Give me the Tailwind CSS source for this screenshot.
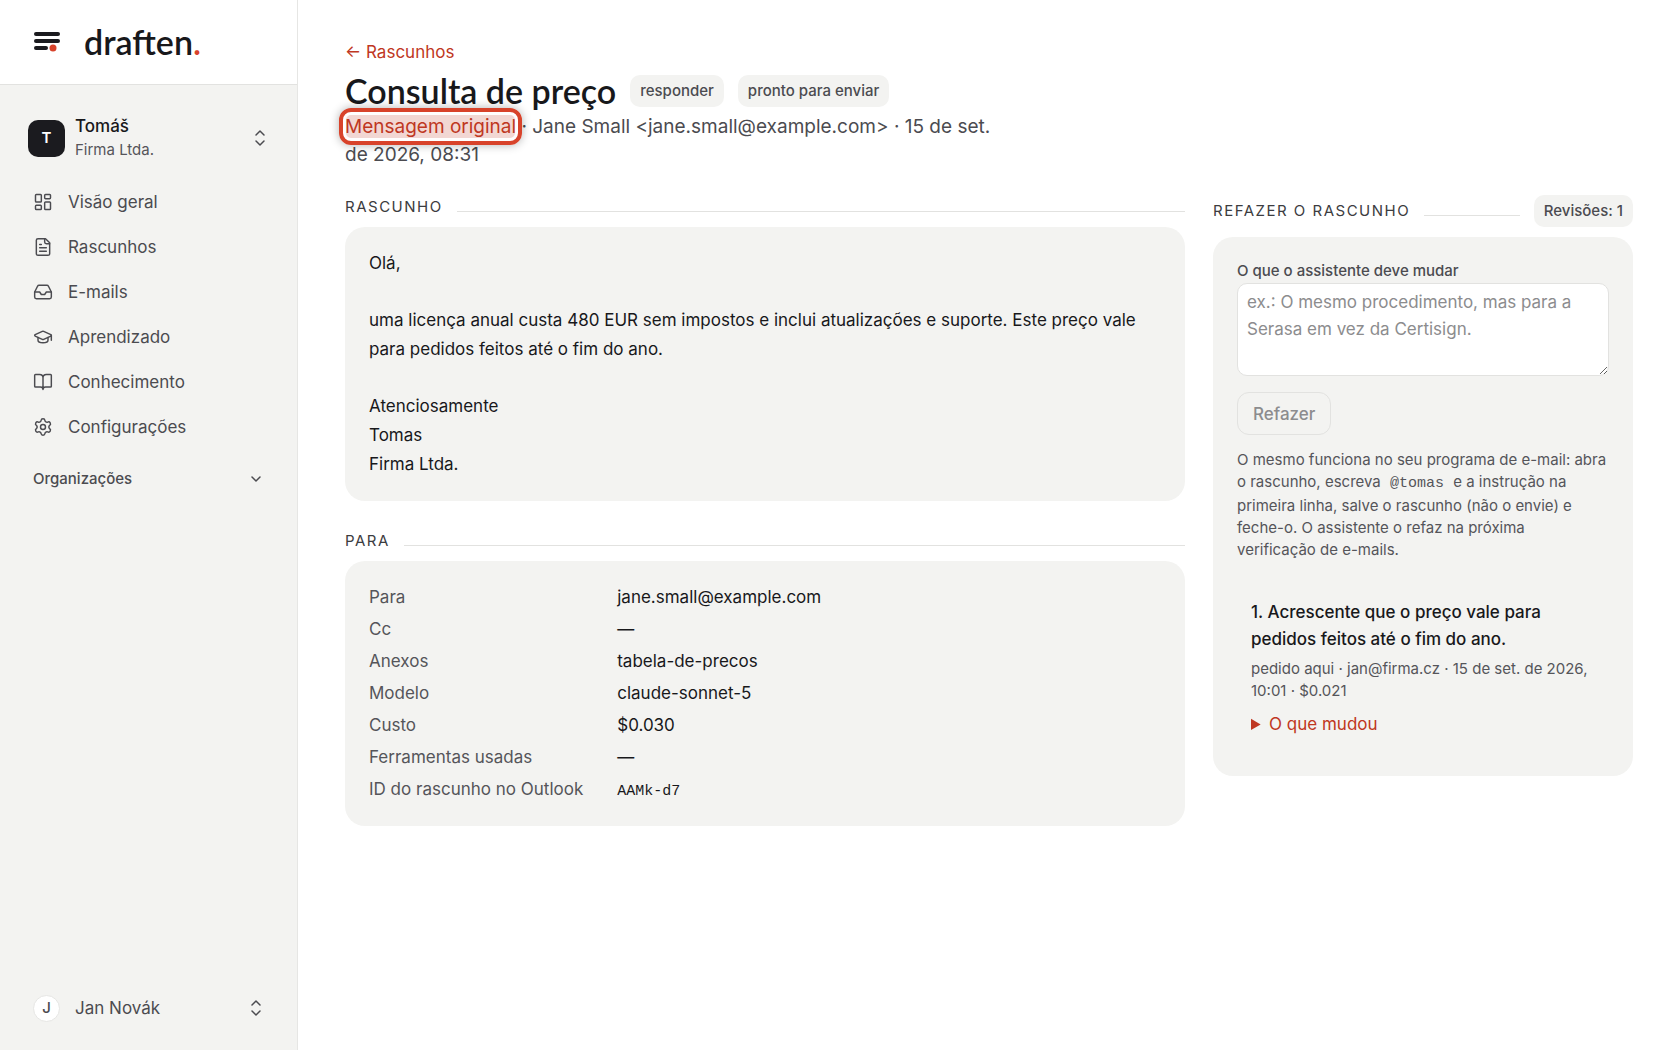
<!DOCTYPE html>
<html lang="pt-BR">
<head>
  <meta charset="UTF-8" />
  <meta name="viewport" content="width=device-width, initial-scale=1.0" />
  <title>Consulta de preço – draften</title>
  <script src="https://cdn.jsdelivr.net/npm/@tailwindcss/browser@4"></script>
</head>
<body class="min-h-screen flex bg-white text-[#18181b] text-[17px] leading-[28px] font-['Inter',sans-serif]">

  <!-- SIDEBAR -->
  <aside class="w-[298px] shrink-0 flex flex-col min-h-screen bg-[#f3f3f1] border-r border-[#e6e6e4]">
    <a href="#" class="h-[85px] shrink-0 flex items-center gap-6 pl-[34px] bg-white border-b border-[#e2e2e0]">
      <svg class="w-[26px] h-5" viewBox="0 0 26 20">
        <g fill="#1b1b1f">
          <rect x="0" y="0" width="26" height="4" rx="2"/>
          <rect x="0" y="7" width="26" height="4" rx="2"/>
          <rect x="0" y="14" width="14" height="4" rx="2"/>
        </g>
        <circle cx="19" cy="16" r="3.5" fill="#d8432b"/>
      </svg>
      <span class="font-['Lato',sans-serif] font-semibold text-[34px] leading-[40px]">draften<span class="text-[#d8432b]">.</span></span>
    </a>

    <button type="button" class="mt-[29px] ml-7 mr-[30px] flex items-center gap-[10px] text-left">
      <span class="w-[37px] h-[37px] rounded-[10px] bg-[#1b1b1f] text-white text-[15px] font-semibold flex items-center justify-center">T</span>
      <span class="flex-1">
        <span class="block font-medium leading-[24px]">Tomáš</span>
        <span class="block text-[15px] leading-[24px] text-[#55555a]">Firma Ltda.</span>
      </span>
      <svg class="w-[15px] h-[18px] text-[#4b4b50]" viewBox="0 0 15 18" fill="none" stroke="currentColor" stroke-width="1.5" stroke-linecap="round" stroke-linejoin="round"><path d="M4 6l4-4 4 4M4 12l4 4 4-4"/></svg>
    </button>

    <nav class="mt-[26px] px-[33px] flex flex-col gap-[17px] text-[#4b4b50]">
      <a href="#" class="flex items-center gap-[15px]">
        <svg class="w-5 h-5" viewBox="0 0 24 24" fill="none" stroke="currentColor" stroke-width="1.75" stroke-linecap="round" stroke-linejoin="round"><rect x="3" y="3" width="7" height="9" rx="1"/><rect x="14" y="3" width="7" height="5" rx="1"/><rect x="14" y="12" width="7" height="9" rx="1"/><rect x="3" y="16" width="7" height="5" rx="1"/></svg>
        Visão geral
      </a>
      <a href="#" class="flex items-center gap-[15px]">
        <svg class="w-5 h-5" viewBox="0 0 24 24" fill="none" stroke="currentColor" stroke-width="1.75" stroke-linecap="round" stroke-linejoin="round"><path d="M15 2H6a2 2 0 0 0-2 2v16a2 2 0 0 0 2 2h12a2 2 0 0 0 2-2V7Z"/><path d="M14 2v4a2 2 0 0 0 2 2h4M10 9H8M16 13H8M16 17H8"/></svg>
        Rascunhos
      </a>
      <a href="#" class="flex items-center gap-[15px]">
        <svg class="w-5 h-5" viewBox="0 0 24 24" fill="none" stroke="currentColor" stroke-width="1.75" stroke-linecap="round" stroke-linejoin="round"><path d="M22 12h-6l-2 3h-4l-2-3H2"/><path d="M5.45 5.11 2 12v6a2 2 0 0 0 2 2h16a2 2 0 0 0 2-2v-6l-3.45-6.89A2 2 0 0 0 16.76 4H7.24a2 2 0 0 0-1.79 1.11z"/></svg>
        E-mails
      </a>
      <a href="#" class="flex items-center gap-[15px]">
        <svg class="w-5 h-5" viewBox="0 0 24 24" fill="none" stroke="currentColor" stroke-width="1.75" stroke-linecap="round" stroke-linejoin="round"><path d="M21.42 10.922a1 1 0 0 0-.019-1.838L12.83 5.18a2 2 0 0 0-1.66 0L2.6 9.08a1 1 0 0 0 0 1.832l8.57 3.908a2 2 0 0 0 1.66 0z"/><path d="M22 10v6M6 12.5V16a6 3 0 0 0 12 0v-3.5"/></svg>
        Aprendizado
      </a>
      <a href="#" class="flex items-center gap-[15px]">
        <svg class="w-5 h-5" viewBox="0 0 24 24" fill="none" stroke="currentColor" stroke-width="1.75" stroke-linecap="round" stroke-linejoin="round"><path d="M12 7v14M3 18a1 1 0 0 1-1-1V4a1 1 0 0 1 1-1h5a4 4 0 0 1 4 4 4 4 0 0 1 4-4h5a1 1 0 0 1 1 1v13a1 1 0 0 1-1 1h-6a3 3 0 0 0-3 3 3 3 0 0 0-3-3z"/></svg>
        Conhecimento
      </a>
      <a href="#" class="flex items-center gap-[15px]">
        <svg class="w-5 h-5" viewBox="0 0 24 24" fill="none" stroke="currentColor" stroke-width="1.75" stroke-linecap="round" stroke-linejoin="round"><path d="M9.671 4.136a2.34 2.34 0 0 1 4.659 0 2.34 2.34 0 0 0 3.319 1.915 2.34 2.34 0 0 1 2.33 4.033 2.34 2.34 0 0 0 0 3.831 2.34 2.34 0 0 1-2.33 4.033 2.34 2.34 0 0 0-3.319 1.915 2.34 2.34 0 0 1-4.659 0 2.34 2.34 0 0 0-3.32-1.915 2.34 2.34 0 0 1-2.33-4.033 2.34 2.34 0 0 0 0-3.831A2.34 2.34 0 0 1 6.35 6.051a2.34 2.34 0 0 0 3.319-1.915"/><circle cx="12" cy="12" r="3"/></svg>
        Configurações
      </a>
    </nav>

    <button type="button" class="mt-6 pl-[33px] pr-[34px] flex items-center justify-between text-[15px] font-medium text-[#4b4b50]">
      Organizações
      <svg class="w-[14px] h-[14px]" viewBox="0 0 14 14" fill="none" stroke="currentColor" stroke-width="1.5" stroke-linecap="round" stroke-linejoin="round"><path d="M3 5l4 4 4-4"/></svg>
    </button>

    <button type="button" class="mt-auto mb-7 pl-[33px] pr-[34px] flex items-center text-[#4b4b50]">
      <span class="w-[27px] h-[27px] mr-[15px] rounded-full bg-white border border-[#e6e6e4] text-[15px] font-medium flex items-center justify-center">J</span>
      Jan Novák
      <svg class="w-[15px] h-[18px] ml-auto" viewBox="0 0 15 18" fill="none" stroke="currentColor" stroke-width="1.5" stroke-linecap="round" stroke-linejoin="round"><path d="M4 6l4-4 4 4M4 12l4 4 4-4"/></svg>
    </button>
  </aside>

  <!-- CONTEÚDO -->
  <main class="flex-1 min-w-0 pt-[38px] px-[47px] pb-12">
    <a href="#" class="block w-fit text-[#bf3722]">← Rascunhos</a>
    <div class="mt-[3px] flex items-center gap-[14px]">
      <h1 class="font-['Lato',sans-serif] font-semibold text-[34px] leading-[44px] whitespace-nowrap">Consulta de preço</h1>
      <span class="px-[10px] h-8 rounded-[10px] bg-[#f3f3f1] text-[15px] leading-8 font-medium text-[#4b4b50]">responder</span>
      <span class="px-[10px] h-8 rounded-[10px] bg-[#f3f3f1] text-[15px] leading-8 font-medium text-[#4b4b50]">pronto para enviar</span>
    </div>
    <p class="max-w-[648px] text-[19px] text-[#4b4b50]">
      <a href="#" class="relative text-[#bf3722] bg-[#bf3722]/20">Mensagem original<span class="absolute -inset-x-[6px] -inset-y-[7px] rounded-[12px] border-4 border-[#d8432b] shadow-[0_0_10px_rgba(0,0,0,0.3),inset_0_0_0_3px_rgba(255,255,255,0.9)]"></span></a>
      · Jane Small &lt;jane.small@example.com&gt; · 15 de set. de 2026, 08:31
    </p>

    <div class="mt-[26px] grid grid-cols-[2fr_1fr] items-start gap-7">
      <div>
        <section>
          <div class="flex items-center gap-[14px]">
            <h2 class="text-[15px] leading-[24px] tracking-[1.5px] text-[#3c3c40]">RASCUNHO</h2>
            <span class="flex-1 mt-[9px] border-t border-[#e2e2e0]"></span>
          </div>
          <div class="mt-2 px-6 py-[22px] flex flex-col gap-7 rounded-[20px] bg-[#f3f3f1] leading-[29px]">
            <p>Olá,</p>
            <p>uma licença anual custa 480 EUR sem impostos e inclui atualizações e suporte. Este preço vale para pedidos feitos até o fim do ano.</p>
            <p>Atenciosamente<br>Tomas<br>Firma Ltda.</p>
          </div>
        </section>

        <section class="mt-7">
          <div class="flex items-center gap-[14px]">
            <h2 class="text-[15px] leading-[24px] tracking-[1.5px] text-[#3c3c40]">PARA</h2>
            <span class="flex-1 mt-[9px] border-t border-[#e2e2e0]"></span>
          </div>
          <dl class="mt-2 px-6 py-[22px] grid grid-cols-[auto_1fr] gap-x-[34px] gap-y-[3px] rounded-[20px] bg-[#f3f3f1] leading-[29px]">
            <dt class="text-[#55555a]">Para</dt><dd>jane.small@example.com</dd>
            <dt class="text-[#55555a]">Cc</dt><dd>—</dd>
            <dt class="text-[#55555a]">Anexos</dt><dd>tabela-de-precos</dd>
            <dt class="text-[#55555a]">Modelo</dt><dd>claude-sonnet-5</dd>
            <dt class="text-[#55555a]">Custo</dt><dd>$0.030</dd>
            <dt class="text-[#55555a]">Ferramentas usadas</dt><dd>—</dd>
            <dt class="text-[#55555a]">ID do rascunho no Outlook</dt><dd><code class="font-['Liberation_Mono',monospace] text-[15px] leading-[22px]">AAMk-d7</code></dd>
          </dl>
        </section>
      </div>

      <section>
        <div class="flex items-center gap-[14px]">
          <h2 class="text-[15px] leading-[24px] tracking-[1.5px] text-[#3c3c40]">REFAZER O RASCUNHO</h2>
          <span class="flex-1 mt-[9px] border-t border-[#e2e2e0]"></span>
          <span class="px-[10px] h-8 rounded-[10px] bg-[#f3f3f1] text-[15px] leading-8 font-medium text-[#4b4b50]">Revisões: 1</span>
        </div>
        <div class="mt-[10px] px-6 py-[22px] rounded-[20px] bg-[#f3f3f1]">
          <form>
            <label for="instrucao" class="block text-[15px] leading-[24px] font-medium text-[#4b4b50]">O que o assistente deve mudar</label>
            <textarea id="instrucao" rows="3" placeholder="ex.: O mesmo procedimento, mas para a Serasa em vez da Certisign." class="block w-full h-[93px] px-[9px] py-[5px] rounded-[10px] border border-[#e2e2e0] bg-white leading-[27px] placeholder:text-[#8c8c8e] resize-y"></textarea>
            <button type="button" disabled class="mt-4 h-[43px] px-[15px] rounded-[12px] border border-[#e2e2e0] font-medium text-[#8c8c8e]">Refazer</button>
          </form>
          <p class="mt-[14px] text-[15px] leading-[22px] text-[#55555a]">O mesmo funciona no seu programa de e-mail: abra o rascunho, escreva <code class="px-[5px] font-['Liberation_Mono',monospace]">@tomas</code> e a instrução na primeira linha, salve o rascunho (não o envie) e feche-o. O assistente o refaz na próxima<br>verificação de e-mails.</p>
          <div class="mt-[38px] px-[14px] pb-4">
            <p class="font-medium leading-[27px]">1. Acrescente que o preço vale para pedidos feitos até o fim do ano.</p>
            <p class="mt-[5px] text-[15px] leading-[22px] text-[#55555a]">pedido aqui · jan@firma.cz · 15 de set. de 2026, 10:01 · $0.021</p>
            <details class="mt-2 text-[#bf3722]">
              <summary class="cursor-pointer">O que mudou</summary>
              <p class="text-[15px]">Acrescente que o preço vale para pedidos feitos até o fim do ano.</p>
            </details>
          </div>
        </div>
      </section>
    </div>
  </main>

</body>
</html>
